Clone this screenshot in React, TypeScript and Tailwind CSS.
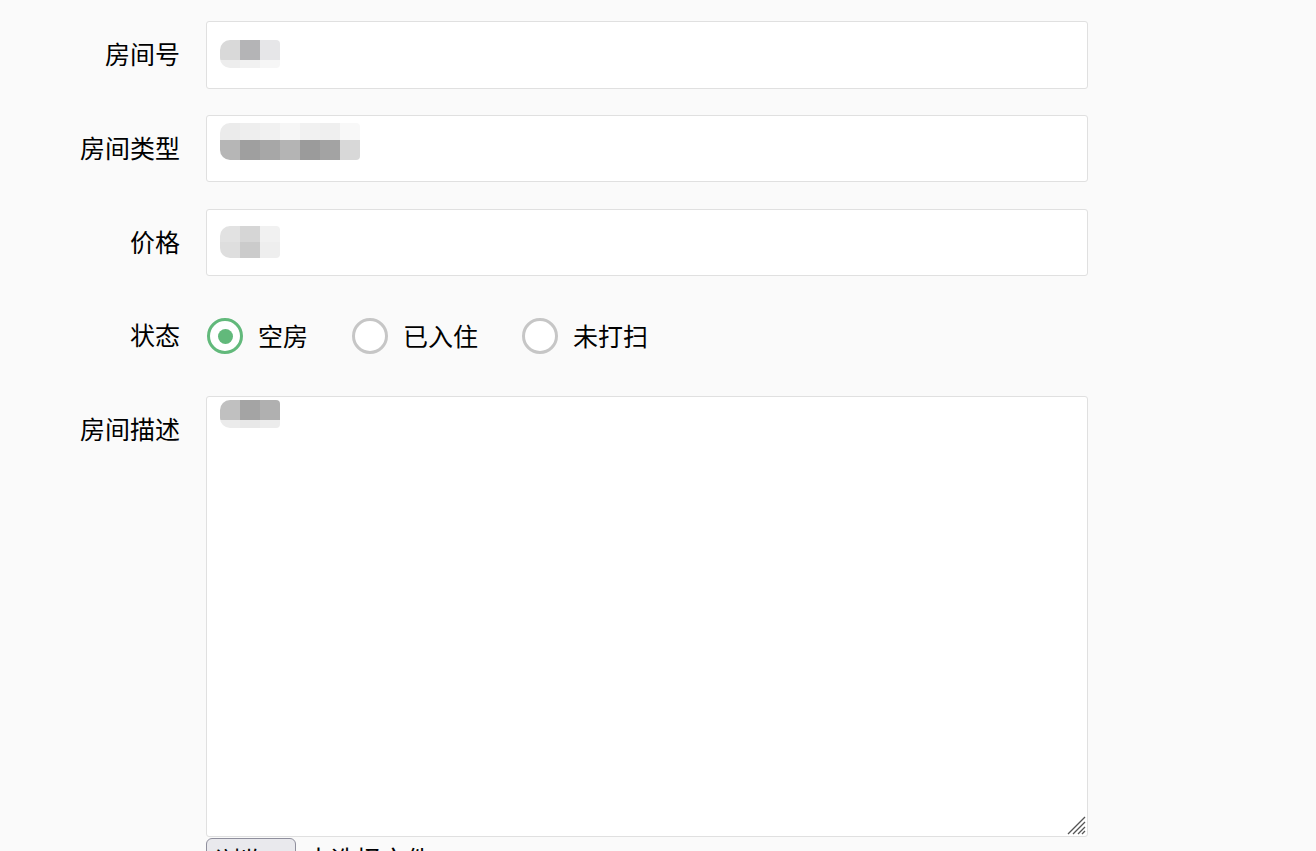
const font = { fontFamily: '"Noto Sans CJK SC", "Noto Sans", sans-serif' };

type Cell = string;

function Mosaic({ rows }: { rows: { h: number; cells: Cell[] }[] }) {
  return (
    <div className="flex flex-col overflow-hidden rounded-l-[10px] rounded-r-[4px]">
      {rows.map((r, i) => (
        <div key={i} className="flex">
          {r.cells.map((c, j) => (
            <div key={j} className="w-5" style={{ height: r.h, background: c }} />
          ))}
        </div>
      ))}
    </div>
  );
}

function Radio({ label, checked }: { label: string; checked?: boolean }) {
  return (
    <label className="flex items-center">
      <span
        className={
          checked
            ? "w-9 h-9 rounded-full border-[3px] border-[#62b97b] bg-white flex items-center justify-center"
            : "w-9 h-9 rounded-full border-[3px] border-[#c6c6c6] bg-white"
        }
      >
        {checked && <span className="w-[15px] h-[15px] rounded-full bg-[#62b97b]" />}
      </span>
      <span className="ml-[15px] text-[25px] text-black">{label}</span>
    </label>
  );
}

function Label({ text, h = "h-[67px]" }: { text: string; h?: string }) {
  return (
    <div className={`${h} flex items-center justify-end pb-[2px] text-[25px] text-black`}>{text}</div>
  );
}

export default function App() {
  return (
    <div className="h-[851px] overflow-hidden bg-[#fafafa]" style={font}>
      <form className="pt-[21px] grid grid-cols-[180px_882px] gap-x-[26px] gap-y-[27px]">
        <Label text="房间号" />
        <div className="h-[68px] -mb-px bg-white border border-[#e0e0e0] rounded-[3px] pl-[13px] pt-[18px]">
          <div className="w-[60px]">
            <Mosaic
              rows={[
                { h: 20, cells: ["#d9d9d9", "#b4b4b6", "#e6e6e8"] },
                { h: 8, cells: ["#ededed", "#f1f1f1", "#f6f6f6"] },
              ]}
            />
          </div>
        </div>

        <Label text="房间类型" />
        <div className="h-[67px] bg-white border border-[#e0e0e0] rounded-[3px] pl-[13px] pt-[7px]">
          <div className="w-[140px]">
            <Mosaic
              rows={[
                { h: 17, cells: ["#ebebeb", "#eeeeee", "#f1f1f1", "#f6f6f6", "#f1f1f1", "#efefef", "#f8f8f8"] },
                { h: 20, cells: ["#b6b6b6", "#9f9f9f", "#a7a7a7", "#b4b4b4", "#9b9b9b", "#a3a3a3", "#d8d8d8"] },
              ]}
            />
          </div>
        </div>

        <Label text="价格" />
        <div className="h-[67px] bg-white border border-[#e0e0e0] rounded-[3px] pl-[13px] pt-[16px]">
          <div className="w-[60px]">
            <Mosaic
              rows={[
                { h: 16, cells: ["#e2e2e2", "#d6d6d6", "#f1f1f1"] },
                { h: 16, cells: ["#dedede", "#cbcbcb", "#eeeeee"] },
              ]}
            />
          </div>
        </div>

        <Label text="状态" h="h-[66px]" />
        <div className="h-[66px] flex items-center gap-[44px] pl-[1px]">
          <Radio label="空房" checked />
          <Radio label="已入住" />
          <Radio label="未打扫" />
        </div>

        <Label text="房间描述" />
        <div className="flex flex-col">
          <div className="relative h-[441px] bg-white border border-[#e0e0e0] rounded-[3px] pl-[13px] pt-[3px]">
            <div className="w-[60px]">
              <Mosaic
                rows={[
                  { h: 20, cells: ["#c0c0c0", "#a4a4a4", "#b0b0b0"] },
                  { h: 8, cells: ["#ebebeb", "#e8e8e8", "#ececec"] },
                ]}
              />
            </div>
            <svg className="absolute right-[1px] bottom-[1px]" width="20" height="20" viewBox="0 0 20 20">
              <path d="M19 2 L2 19 M19 7 L7 19 M19 12 L12 19 M19 16 L16 19" stroke="#555" strokeWidth="1.3" />
            </svg>
          </div>
          <div className="flex items-start">
            <span className="mt-[1px] h-[40px] w-[90px] border border-[#8f8f9d] rounded-[6px] bg-[#e9e9ed] text-[25px] text-black pl-[8px] leading-[40px]">
              浏览...
            </span>
            <span className="ml-[10px] mt-[1px] text-[25px] text-black leading-[40px]">未选择文件。</span>
          </div>
        </div>
      </form>
    </div>
  );
}
